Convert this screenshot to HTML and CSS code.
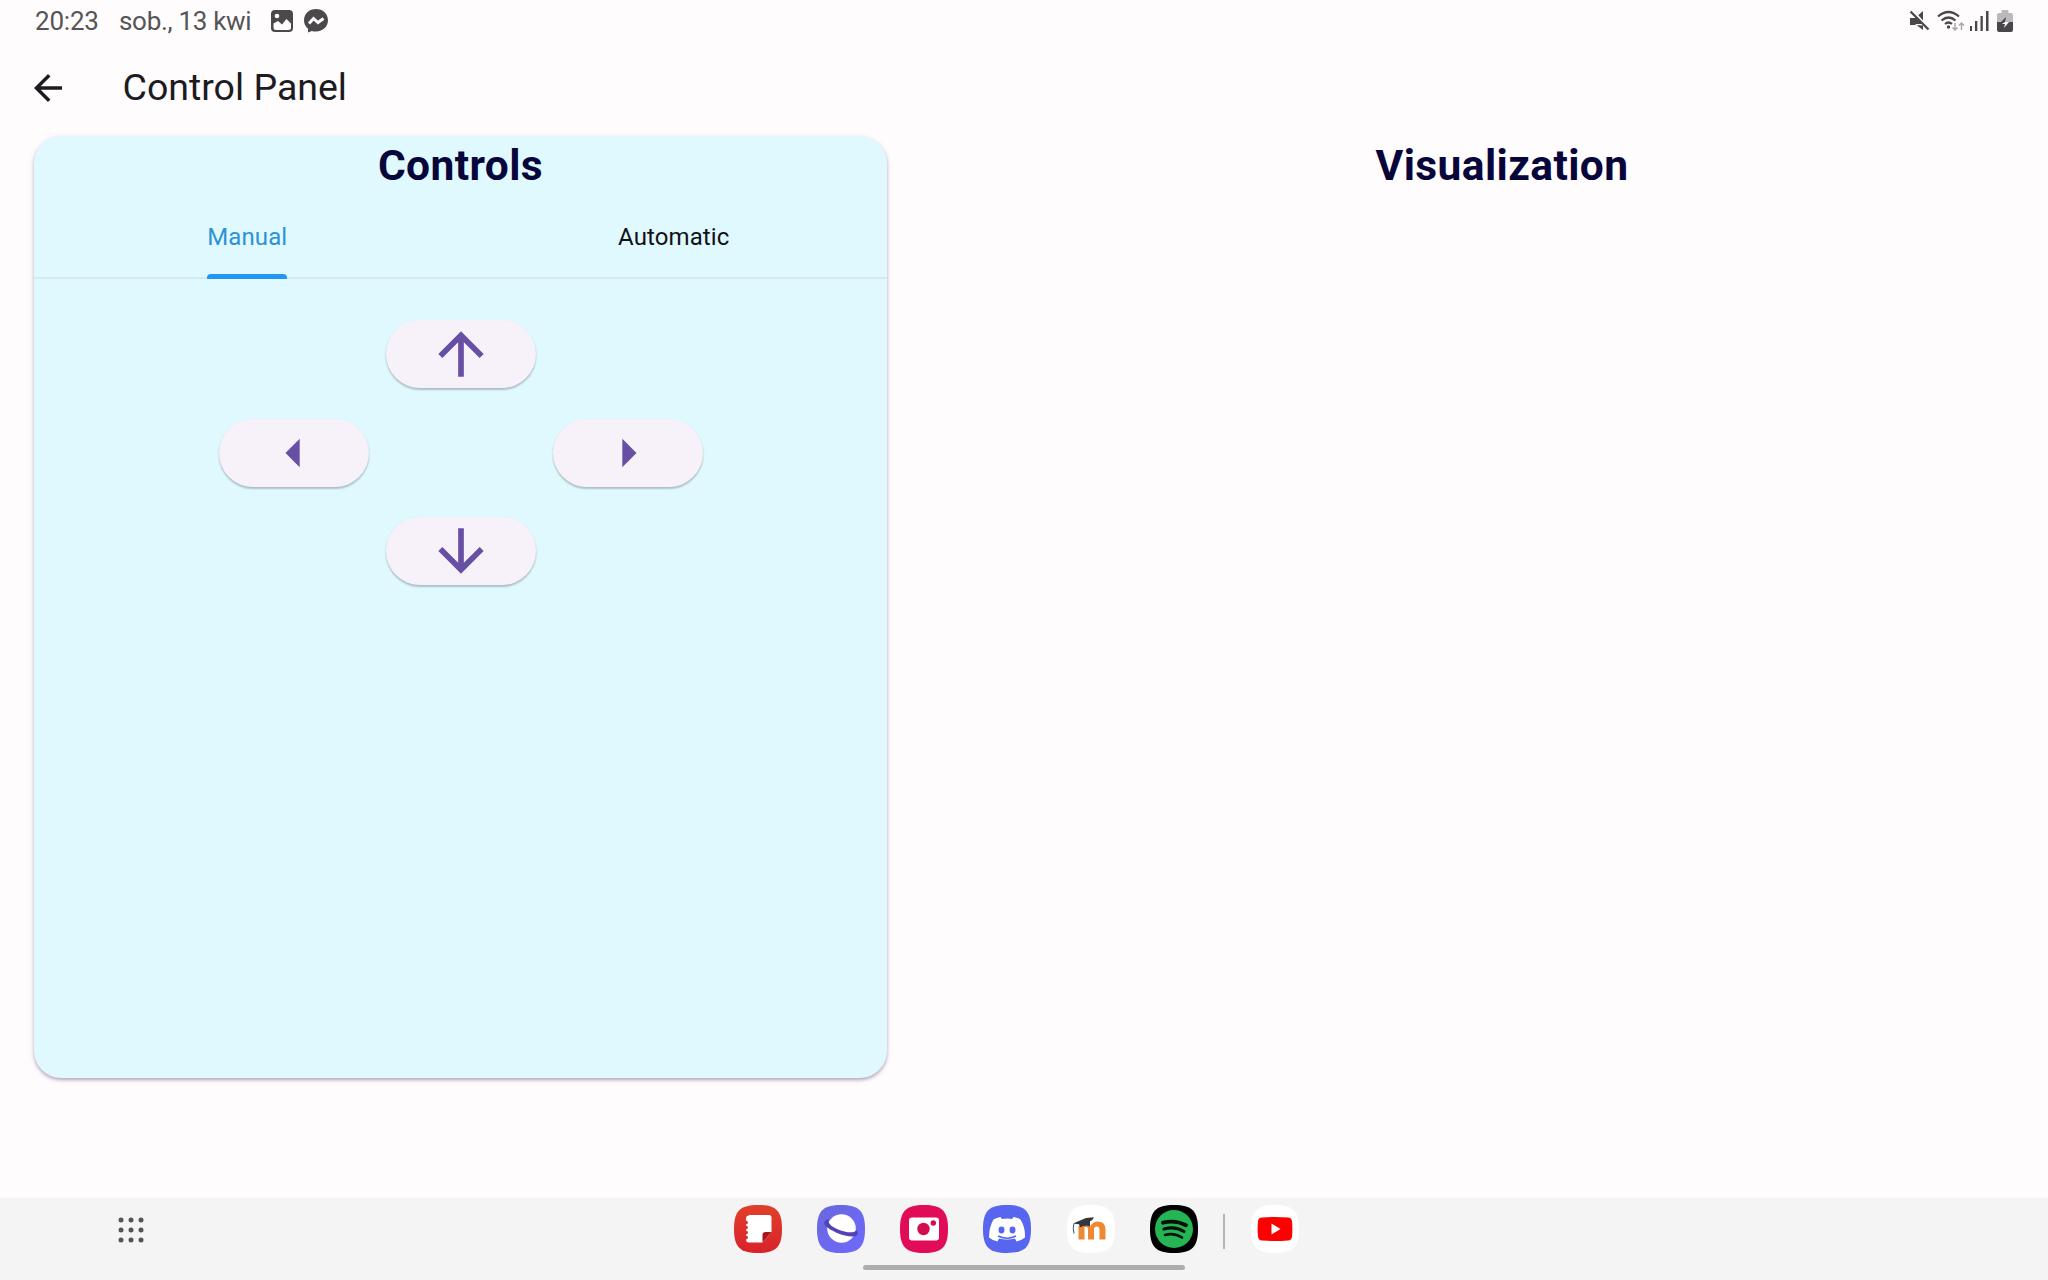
FILE: index.html
```html
<!DOCTYPE html>
<html lang="pl">
<head>
<meta charset="utf-8">
<title>Control Panel</title>
<link rel="stylesheet" href="styles.css">
</head>
<body>
<header class="status">
  <span class="clock">20:23</span>
  <span class="date">sob., 13 kwi</span>
  <svg class="picture" width="24" height="24" viewBox="0 0 24 24"><rect x="1" y="1" width="22" height="22" rx="4" fill="#4b494b"/><circle cx="7" cy="7" r="2.300" fill="#fffcfe"/><path d="M3.500 14.500L8 12l4 3.500 4.500-5.500 4.500 4.500v4q0 2.500-2.500 2.500H6q-2.500 0-2.500-2.500z" fill="#fffcfe"/></svg>
  <svg class="messenger" width="26" height="26" viewBox="0 0 26 26"><path d="M13 1C6.200 1 1 5.800 1 12.300c0 3.600 1.500 6.500 4 8.500v3.700l3.800-1.600c1.300.4 2.700.6 4.200.6 6.800 0 12-4.700 12-11.200S19.800 1 13 1z" fill="#4b494b"/><path d="M6 15.500l4.500-5 4.500 4 5.500-4" fill="none" stroke="#fffcfe" stroke-width="3"/></svg>
  <div class="system">
    <svg width="22" height="22" viewBox="0 0 22 22"><path d="M1 8h5l8-7v14.500L6 15H1zM6 14l8 6v-6z" fill="#494749"/><path d="M3 0l18 20" stroke="#fffcfe" stroke-width="2.500"/><path d="M1.500 1.500l18 18" stroke="#494749" stroke-width="2.300"/></svg>
    <svg width="28" height="22" viewBox="0 0 28 22"><g fill="none" stroke="#494749" stroke-width="2.200"><path d="M1 6.500Q11.500-2.500 22 6.500"/><path d="M4.500 10.500q7-6 14 0"/><path d="M8 14q3.500-3 7 0"/></g><circle cx="11.500" cy="17" r="1.700" fill="#494749"/><path d="M18 13v7m-2.500-2.500L18 20l2.500-2.500M24.500 20v-7M22 15.500l2.500-2.500 2.500 2.500" fill="none" stroke="#aaa8aa" stroke-width="1.500"/></svg>
    <svg width="19" height="20" viewBox="0 0 19 20"><g fill="#494749"><rect x="0" y="15" width="2" height="5"/><rect x="5" y="10" width="2.300" height="10"/><rect x="10.500" y="5" width="2.300" height="15"/><rect x="16" y="0" width="2.500" height="20"/></g></svg>
    <svg class="battery" width="16" height="22" viewBox="0 0 16 22"><path d="M4.500 1q0-1 1-1h5q1 0 1 1v2h2.500q2 0 2 2v7H0V5q0-2 2-2h2.500z" fill="#bbb9bb"/><path d="M0 12h16v8q0 2-2 2H2q-2 0-2-2z" fill="#494749"/><path d="M9 7l-5 5h4z" fill="#494749"/><path d="M8 12h4l-5 6 1-4H5z" fill="#fffcfe"/></svg>
  </div>
</header>
<div class="appbar">
  <svg width="28" height="28" viewBox="4 4 16 16"><path d="M20 11H7.830l5.590-5.590L12 4l-8 8 8 8 1.410-1.410L7.830 13H20z" fill="#1c1b1f"/></svg>
  <h1>Control Panel</h1>
</div>
<main>
  <section class="card">
    <h2>Controls</h2>
    <nav class="tabs">
      <div class="tab active"><span>Manual</span></div>
      <div class="tab"><span>Automatic</span></div>
    </nav>
    <div class="pad">
      <button aria-label="Up"><svg viewBox="0 0 24 24"><path d="M4 12l1.410 1.410L11 7.830V20h2V7.830l5.580 5.590L20 12l-8-8z"/></svg></button>
      <div class="pair">
        <button aria-label="Left"><svg viewBox="0 0 24 24"><path d="M14 7l-5 5 5 5z"/></svg></button>
        <button aria-label="Right"><svg viewBox="0 0 24 24"><path d="M10 17l5-5-5-5z"/></svg></button>
      </div>
      <button aria-label="Down"><svg viewBox="0 0 24 24"><path d="M20 12l-1.410-1.410L13 16.170V4h-2v12.170l-5.580-5.590L4 12l8 8z"/></svg></button>
    </div>
  </section>
  <section class="view"><h2>Visualization</h2></section>
</main>
<footer class="taskbar">
  <svg class="apps" width="26" height="26" viewBox="0 0 26 26" fill="#555"><circle cx="3" cy="3" r="2.500"/><circle cx="13" cy="3" r="2.500"/><circle cx="23" cy="3" r="2.500"/><circle cx="3" cy="13" r="2.500"/><circle cx="13" cy="13" r="2.500"/><circle cx="23" cy="13" r="2.500"/><circle cx="3" cy="23" r="2.500"/><circle cx="13" cy="23" r="2.500"/><circle cx="23" cy="23" r="2.500"/></svg>
  <div class="dock">
    <svg viewBox="0 0 48 48"><defs><linearGradient id="red" x2="0" y2="1"><stop stop-color="#e04029"/><stop offset="1" stop-color="#d9222b"/></linearGradient></defs><path d="M24 0C42 0 48 6 48 24S42 48 24 48 0 42 0 24 6 0 24 0z" fill="url(#red)"/><path d="M15 10h20q2.500 0 2.500 2.500V27l-9 10.500H15q-3 0-3-3 2-.5 2-2t-2-2v-1q2-.5 2-2t-2-2v-1q2-.5 2-2t-2-2v-1q2-.5 2-2t-2-2v-2q0-3 3-3z" fill="#fff"/><path d="M28.500 37.500V30q0-3 3-3h6z" fill="#a9151d"/></svg>
    <svg viewBox="0 0 48 48"><defs><linearGradient id="violet" x2="1" y2="1"><stop stop-color="#6868dd"/><stop offset="1" stop-color="#7068ff"/></linearGradient></defs><path d="M24 0C42 0 48 6 48 24S42 48 24 48 0 42 0 24 6 0 24 0z" fill="url(#violet)"/><circle cx="24.500" cy="23.500" r="14.300" fill="#fff"/><path d="M11.500 14C6 16 6 19 10.500 22.500 18 28 29 32 36 31.500c5 0 6-3.500 3.500-6.500-1.500 2.500-6 3-12 1.500-8-2-15.500-6-16-10z" fill="#5143b5"/></svg>
    <svg viewBox="0 0 48 48"><path d="M24 0C42 0 48 6 48 24S42 48 24 48 0 42 0 24 6 0 24 0z" fill="#e20b58"/><rect x="9" y="12.500" width="30" height="23" rx="3" fill="#fff"/><circle cx="23.500" cy="24" r="6.200" fill="#d50b50"/><circle cx="33.300" cy="18" r="2.700" fill="#d50b50"/></svg>
    <svg viewBox="0 0 48 48"><path d="M24 0C42 0 48 6 48 24S42 48 24 48 0 42 0 24 6 0 24 0z" fill="#5865ee"/><path d="M17.500 12L19 14q5-1 10 0l1.500-2q4 .5 7 2.500 5 8 4.500 18-3.500 3-8.500 4l-1.500-3q-8 2-16 0l-1.500 3q-5-1-8.500-4Q6 22 10.500 14.500q3-2 7-2.500z" fill="#fff"/><path d="M15 31q9 4.500 18 0" fill="none" stroke="#5865ee" stroke-width="1.500"/><ellipse cx="18.500" cy="25" rx="3" ry="3.400" fill="#5865ee"/><ellipse cx="29.500" cy="25" rx="3" ry="3.400" fill="#5865ee"/></svg>
    <svg viewBox="0 0 48 48"><path d="M24 0C42 0 48 6 48 24S42 48 24 48 0 42 0 24 6 0 24 0z" fill="#fff"/><path d="M11.500 34.500V21h12q2.500-4.500 7-4.500 8 0 8 8v10h-6V25q0-3.500-2.800-3.500T27 25v9.500h-6V25q0-2-1-3h-2.500v12.500z" fill="#ee8933"/><path d="M6 18.500L19 13l8-.8-2 3-2 1v5q-5-1-10 1l-1-3z" fill="#363537"/><path d="M7 18.500q-1.500 5 0 10" stroke="#315267" fill="none"/></svg>
    <svg viewBox="0 0 48 48"><path d="M24 0C42 0 48 6 48 24S42 48 24 48 0 42 0 24 6 0 24 0z" fill="#000"/><circle cx="24" cy="24" r="19" fill="#25b554"/><g fill="none" stroke="#061109" stroke-linecap="round"><path d="M13 17.700q12.500-3 23 2.500" stroke-width="3.800"/><path d="M14 24q11-3 20 2.500" stroke-width="3.200"/><path d="M15 30q9-2.500 17 2.500" stroke-width="2.600"/></g></svg>
    <i class="divider"></i>
    <svg viewBox="0 0 48 48"><path d="M24 0C42 0 48 6 48 24S42 48 24 48 0 42 0 24 6 0 24 0z" fill="#fff"/><path d="M11 12.500q13-1 26 0 3.500 0 4 4 .8 7.500 0 15-.5 4-4 4-13 1-26 0-3.500 0-4-4-.8-7.500 0-15 .5-4 4-4z" fill="#f00"/><path d="M20.500 18.500l9 5.500-9 5.500z" fill="#fff"/></svg>
  </div>
  <i class="handle"></i>
</footer>
</body>
</html>
```
FILE: styles.css
```css
* { box-sizing: border-box; }

body {
  margin: 0;
  width: 2048px;
  height: 1280px;
  display: flex;
  flex-direction: column;
  overflow: hidden;
  background: #fffcfe;
  color: #1c1b1f;
  font-family: Roboto, sans-serif;
}

svg { display: block; flex: none; }
h1, h2 { margin: 0; }

.status {
  height: 42px;
  flex: none;
  display: flex;
  align-items: center;
  padding: 0 35px 0 35px;
  color: #565456;
  font-size: 26px;
}

.clock { width: 84px; letter-spacing: -0.2px; }
.date { width: 151px; white-space: nowrap; letter-spacing: -0.3px; }
.picture { margin-right: 9px; }

.system {
  display: flex;
  align-items: center;
  margin-left: auto;
}

.system svg:nth-child(1) { margin-right: 6px; }
.system svg:nth-child(2) { margin-right: 5px; }
.system svg:nth-child(3) { margin-right: 8px; }

.appbar {
  height: 94px;
  flex: none;
  display: flex;
  align-items: center;
  gap: 60.5px;
  padding: 0 34px 2px;
}

.appbar h1 {
  padding-bottom: 2px;
  font-size: 37.5px;
  font-weight: 400;
  line-height: 46px;
}

main {
  flex: 1;
  display: grid;
  grid-template-columns: 853px 1fr;
  gap: 126px;
  padding: 0 22px 120px 34px;
}

.card {
  border-radius: 27px;
  background: #e0f9ff;
  box-shadow: 0 2px 3px rgba(50, 20, 60, .26), 0 2px 5px 1px rgba(80, 40, 90, .12);
}

h2 {
  height: 58px;
  padding-top: 1px;
  color: #06063b;
  font-size: 42.5px;
  font-weight: 700;
  letter-spacing: .4px;
  line-height: 58px;
  text-align: center;
}

.view { padding: 0; }
.view h2 { width: 978px; }

.tabs {
  display: flex;
  height: 85px;
  border-bottom: 2px solid #d2eaf0;
  font-size: 24px;
}

.tab {
  flex: 1;
  display: flex;
  justify-content: center;
  height: 85px;
}

.tab span {
  padding-top: 29px;
  line-height: 28px;
  letter-spacing: .1px;
  color: #101316;
}

.tab.active span {
  display: flex;
  flex-direction: column;
  justify-content: space-between;
  color: #2e92d6;
}

.tab.active span::after {
  content: "";
  height: 5px;
  border-radius: 4px 4px 0 0;
  background: #2196f3;
}

.pad {
  display: flex;
  flex-direction: column;
  align-items: center;
  gap: 30.5px;
  padding-top: 41px;
}

.pair { display: flex; gap: 184px; }

button {
  display: flex;
  align-items: center;
  justify-content: center;
  width: 150px;
  height: 68px;
  padding: 0;
  border: 0;
  border-radius: 34px;
  background: #f7f2fa;
  box-shadow: 0 2px 2px rgba(0, 0, 0, .2), 0 1px 3px rgba(0, 0, 0, .07);
}

button svg { width: 68px; height: 68px; fill: #6750a4; }

.taskbar {
  flex: none;
  display: grid;
  grid-template: 67px 15px / 733.5px 1fr;
  height: 82px;
  background: #f4f4f4;
}

.apps { margin: 19px 0 0 118px; }

.dock {
  display: flex;
  align-items: flex-start;
  gap: 35.3px;
  padding-top: 7px;
}

.dock svg { width: 48px; height: 48px; }

.divider {
  width: 2px;
  height: 35px;
  margin: 9px -10px 0;
  background: #b5b5b5;
}

.handle {
  grid-column: 1 / -1;
  width: 322px;
  height: 5px;
  margin-left: 863px;
  border-radius: 3px;
  background: #aeaeae;
}
```
